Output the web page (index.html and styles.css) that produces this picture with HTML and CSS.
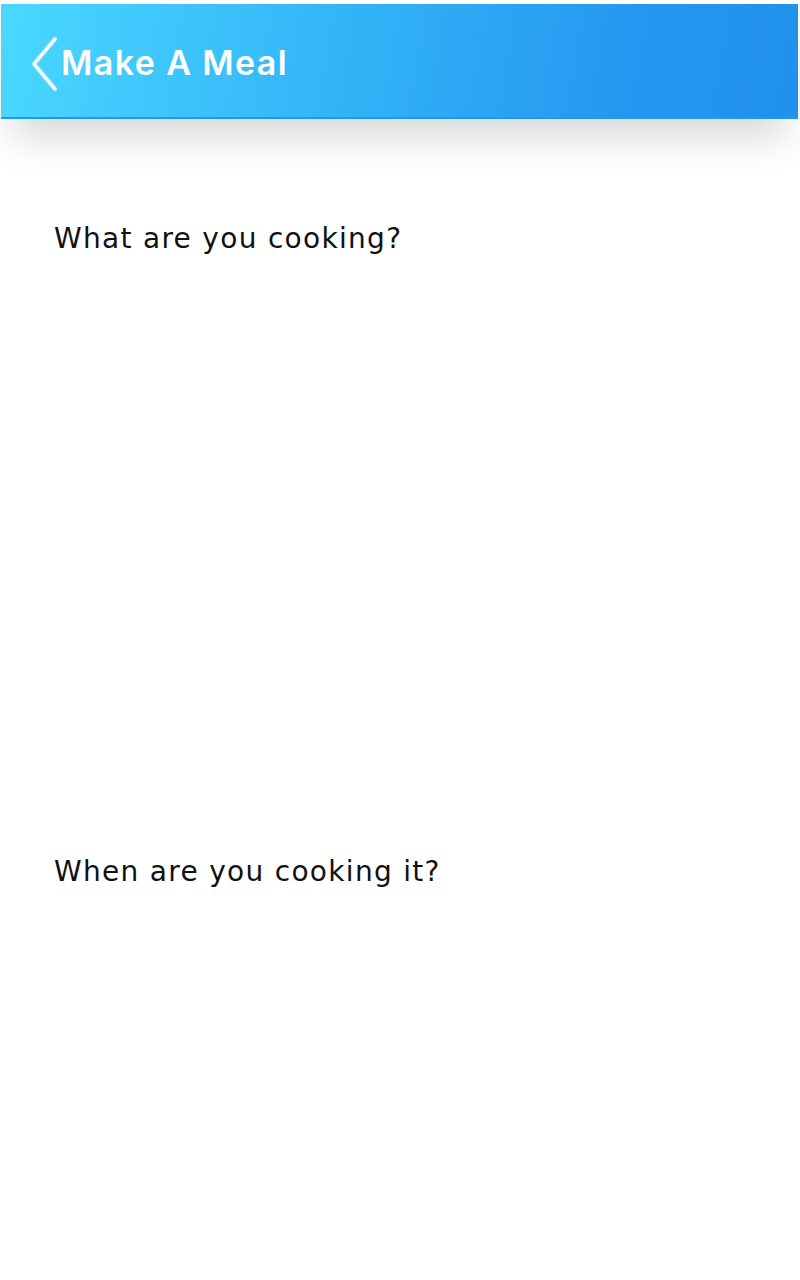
FILE: index.html
```html
<!DOCTYPE html>
<html lang="en">
<head>
<meta charset="utf-8">
<title>Make A Meal</title>
<link rel="stylesheet" href="styles.css">
</head>
<body>
<div class="screen">
  <header class="appbar">
    <button class="back" aria-label="Back">
      <svg width="28" height="56" viewBox="0 0 28 56" aria-hidden="true">
        <polyline points="24,3 3,28 24,53" fill="none" stroke="#fff" stroke-width="3.2" stroke-linecap="round" stroke-linejoin="round"/>
      </svg>
    </button>
    <h1 class="title">Make A Meal</h1>
  </header>
  <main class="form">
    <section class="field field-what">
      <h2 class="label">What are you cooking?</h2>
      <div class="field-body"></div>
    </section>
    <section class="field field-when">
      <h2 class="label">When are you cooking it?</h2>
      <div class="field-body"></div>
    </section>
  </main>
</div>
</body>
</html>
```
FILE: styles.css
```css
* { box-sizing: border-box; }
html, body { margin: 0; padding: 0; background: #fff; }
body { font-family: "DejaVu Sans", "Open Sans", sans-serif; color: #111; }

.screen { width: 800px; height: 1280px; overflow: hidden; padding-top: 4px; }

.appbar {
  margin: 0 2px 0 1px;
  height: 115px;
  display: flex;
  align-items: center;
  gap: 2px;
  padding-left: 30px;
  background: linear-gradient(100deg, #4ad8ff 0%, #34b6f8 40%, #2496f0 80%, #2191ee 100%);
  border-bottom: 2px solid #1a9cec;
  box-shadow: 0 30px 40px -12px rgba(0, 0, 0, 0.16);
  position: relative;
}

.back {
  background: none;
  border: 0;
  padding: 0;
  margin-top: 6px;
  display: flex;
  filter: drop-shadow(0 0 1px rgba(255,255,255,0.6));
}

.title {
  margin: 4px 0 0;
  color: #fff;
  font-family: Inter, "DejaVu Sans", sans-serif;
  font-size: 34px;
  font-weight: 600;
  letter-spacing: 1.4px;
}

.form { padding: 103px 54px 0; }

.field-body { height: 599px; }

.label {
  margin: 0;
  font-size: 28px;
  font-weight: 400;
  line-height: 34px;
  letter-spacing: 1.3px;
  color: #111;
}
```
